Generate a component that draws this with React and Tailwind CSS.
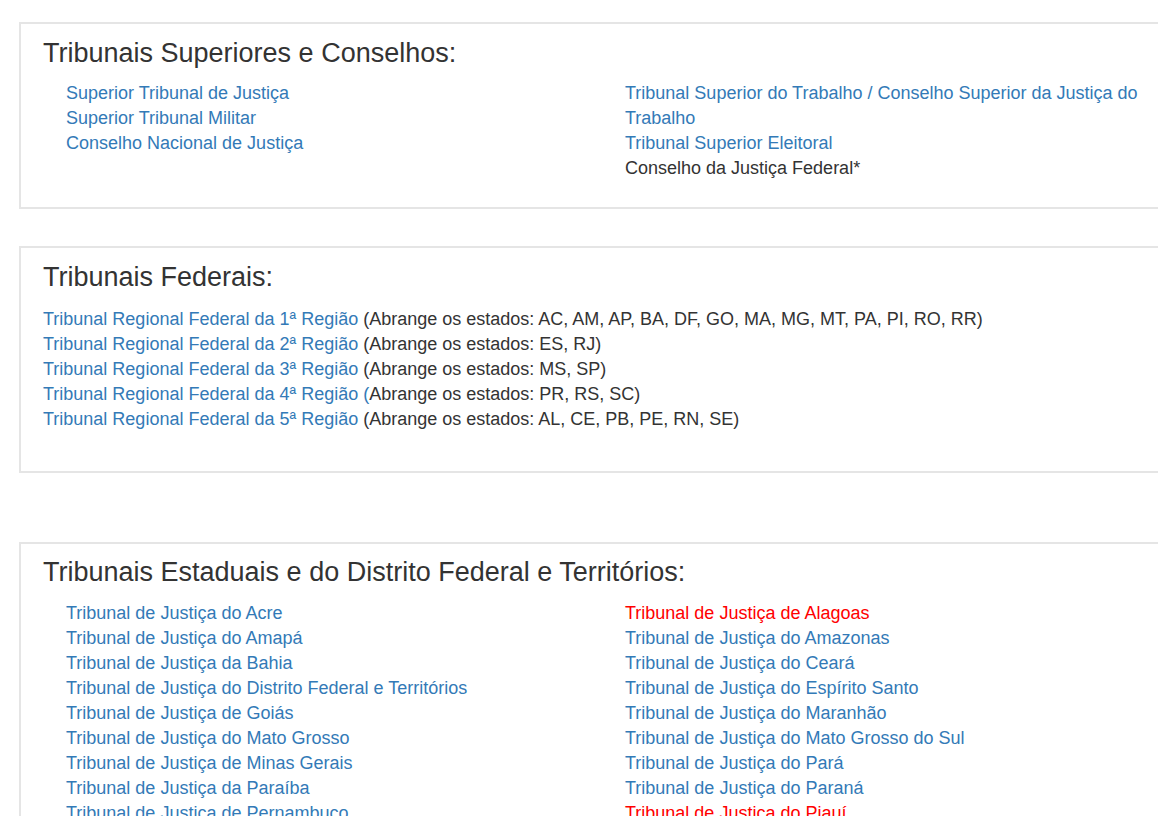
// Lista de tribunais

import React from "react";

const superioresEsq = [
  { nome: "Superior Tribunal de Justiça" },
  { nome: "Superior Tribunal Militar" },
  { nome: "Conselho Nacional de Justiça" },
];

const superioresDir = [
  { nome: "Tribunal Superior do Trabalho / Conselho Superior da Justiça do Trabalho" },
  { nome: "Tribunal Superior Eleitoral" },
  { nome: "Conselho da Justiça Federal*", semLink: true },
];

const federais = [
  { link: "Tribunal Regional Federal da 1ª Região ", resto: "(Abrange os estados: AC, AM, AP, BA, DF, GO, MA, MG, MT, PA, PI, RO, RR)" },
  { link: "Tribunal Regional Federal da 2ª Região ", resto: "(Abrange os estados: ES, RJ)" },
  { link: "Tribunal Regional Federal da 3ª Região ", resto: "(Abrange os estados: MS, SP)" },
  { link: "Tribunal Regional Federal da 4ª Região (", resto: "Abrange os estados: PR, RS, SC)" },
  { link: "Tribunal Regional Federal da 5ª Região ", resto: "(Abrange os estados: AL, CE, PB, PE, RN, SE)" },
];

const estaduaisEsq = [
  { nome: "Tribunal de Justiça do Acre" },
  { nome: "Tribunal de Justiça do Amapá" },
  { nome: "Tribunal de Justiça da Bahia" },
  { nome: "Tribunal de Justiça do Distrito Federal e Territórios" },
  { nome: "Tribunal de Justiça de Goiás" },
  { nome: "Tribunal de Justiça do Mato Grosso" },
  { nome: "Tribunal de Justiça de Minas Gerais" },
  { nome: "Tribunal de Justiça da Paraíba" },
  { nome: "Tribunal de Justiça de Pernambuco" },
  { nome: "Tribunal de Justiça do Rio de Janeiro" },
  { nome: "Tribunal de Justiça do Rio Grande do Sul" },
  { nome: "Tribunal de Justiça de Rondônia" },
  { nome: "Tribunal de Justiça de Santa Catarina" },
  { nome: "Tribunal de Justiça de Sergipe" },
];

const estaduaisDir = [
  { nome: "Tribunal de Justiça de Alagoas", alerta: true },
  { nome: "Tribunal de Justiça do Amazonas" },
  { nome: "Tribunal de Justiça do Ceará" },
  { nome: "Tribunal de Justiça do Espírito Santo" },
  { nome: "Tribunal de Justiça do Maranhão" },
  { nome: "Tribunal de Justiça do Mato Grosso do Sul" },
  { nome: "Tribunal de Justiça do Pará" },
  { nome: "Tribunal de Justiça do Paraná" },
  { nome: "Tribunal de Justiça do Piauí", alerta: true },
  { nome: "Tribunal de Justiça do Rio Grande do Norte" },
  { nome: "Tribunal de Justiça de Roraima" },
  { nome: "Tribunal de Justiça de São Paulo" },
  { nome: "Tribunal de Justiça do Tocantins" },
];

const Painel = ({ titulo, children, className = "" }) => (
  <div
    className={`ml-[19px] w-[1166px] border-2 border-[#e5e5e5] bg-white pl-[22px] pr-[22px] ${className}`}
  >
    <h3 className="text-[27px] leading-[30px] font-normal text-[#333]">{titulo}</h3>
    {children}
  </div>
);

const Lista = ({ itens }) => (
  <ul className="pl-[23px]">
    {itens.map((item) => (
      <li key={item.nome}>
        {item.semLink ? (
          <span className="text-[#333]">{item.nome}</span>
        ) : (
          <a
            href="#"
            className={item.alerta ? "text-[#ff0000]" : "text-[#337ab7]"}
          >
            {item.nome}
          </a>
        )}
      </li>
    ))}
  </ul>
);

const DuasColunas = ({ esquerda, direita, className = "mt-[13px]" }) => (
  <div className={`grid grid-cols-[559px_559px] ${className}`}>
    <Lista itens={esquerda} />
    <Lista itens={direita} />
  </div>
);

export default function App() {
  return (
    <div
      className="w-full overflow-hidden bg-white pt-[22px] pb-10 text-[18px] leading-[25px] text-[#333]"
      style={{ fontFamily: '"Liberation Sans", Arial, sans-serif' }}
    >
      <Painel titulo="Tribunais Superiores e Conselhos:" className="pt-[14px] pb-[26px]">
        <DuasColunas esquerda={superioresEsq} direita={superioresDir} />
      </Painel>

      <Painel titulo="Tribunais Federais:" className="mt-[37px] pt-[14px] pb-[39px]">
        <div className="mt-[15px]">
          {federais.map((f) => (
            <div key={f.link}>
              <a href="#" className="text-[#337ab7]">
                {f.link}
              </a>
              <span>{f.resto}</span>
            </div>
          ))}
        </div>
      </Painel>

      <Painel
        titulo="Tribunais Estaduais e do Distrito Federal e Territórios:"
        className="mt-[69px] pt-[13px] pb-[26px]"
      >
        <DuasColunas
          esquerda={estaduaisEsq}
          direita={estaduaisDir}
          className="mt-[14px]"
        />
      </Painel>
    </div>
  );
}
